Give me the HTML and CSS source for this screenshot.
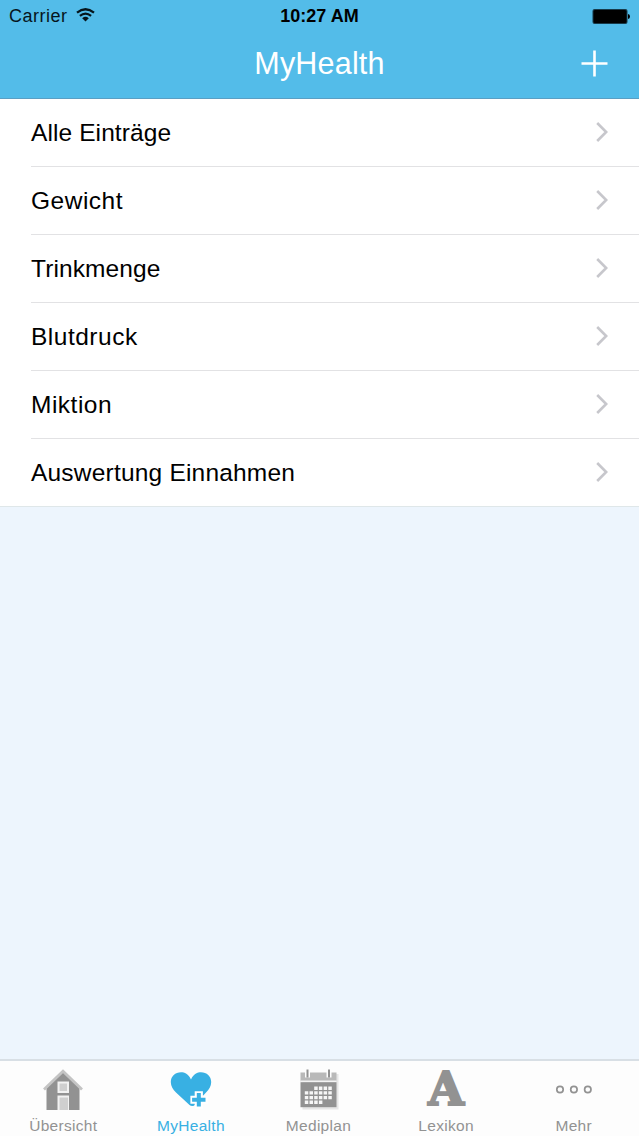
FILE: index.html
```html
<!DOCTYPE html>
<html lang="de">
  <head>
    <meta charset="UTF-8" />
    <title>MyHealth</title>
    <link rel="stylesheet" href="styles.css">
  </head>
  <body>
    <!-- Kopfbereich -->
    <header>
      <div class="statusbar">
        <div class="carrier">
          <span>Carrier</span>
          <svg width="19" height="14" viewBox="0 0 19 14">
            <path d="M1 4.6 Q9.5 -2.2 18 4.6" fill="none" stroke="#06151c" stroke-width="2.3" />
            <path d="M3.9 7.8 Q9.5 3.3 15.1 7.8" fill="none" stroke="#06151c" stroke-width="2.2" />
            <path d="M6.2 10.2 Q9.5 7.4 12.8 10.2 L9.5 13.4 Z" fill="#06151c" />
          </svg>
        </div>
        <div class="time">10:27 AM</div>
        <div class="battery">
          <svg width="38" height="15" viewBox="0 0 38 15">
            <rect x="0.5" y="0" width="35" height="15" rx="2" fill="#173a4a" />
            <rect x="1.5" y="1" width="33" height="13" rx="1.5" fill="#000" />
            <path d="M36 5 Q38 5.3 38 7.5 Q38 9.7 36 10 Z" fill="#000" />
          </svg>
        </div>
      </div>
      <div class="navbar">
        <h1>MyHealth</h1>
        <button class="add" aria-label="Hinzufügen">
          <svg width="27" height="27" viewBox="0 0 27 27">
            <path d="M13.5 0.5 V26.5 M0.5 13.5 H26.5" stroke="#fff" stroke-width="2.6" />
          </svg>
        </button>
      </div>
    </header>

    <!-- Liste -->
    <main>
      <ul class="liste">
        <li><span>Alle Einträge</span><svg class="pfeil" viewBox="0 0 12 20"><path d="M1.2 1 L10.2 10 L1.2 19" /></svg></li>
        <li><span class="weit">Gewicht</span><svg class="pfeil" viewBox="0 0 12 20"><path d="M1.2 1 L10.2 10 L1.2 19" /></svg></li>
        <li><span>Trinkmenge</span><svg class="pfeil" viewBox="0 0 12 20"><path d="M1.2 1 L10.2 10 L1.2 19" /></svg></li>
        <li><span class="weit">Blutdruck</span><svg class="pfeil" viewBox="0 0 12 20"><path d="M1.2 1 L10.2 10 L1.2 19" /></svg></li>
        <li><span class="weit">Miktion</span><svg class="pfeil" viewBox="0 0 12 20"><path d="M1.2 1 L10.2 10 L1.2 19" /></svg></li>
        <li><span class="lang">Auswertung Einnahmen</span><svg class="pfeil" viewBox="0 0 12 20"><path d="M1.2 1 L10.2 10 L1.2 19" /></svg></li>
      </ul>
    </main>

    <!-- Tableiste -->
    <nav class="tabbar">
      <a class="tab">
        <svg width="42" height="44" viewBox="0 0 42 44">
          <path d="M4.5 42 V20 L21 3 L37.5 20 V42 Z" fill="#929292" />
          <path d="M2 21.5 L21 3.2 L40 21.5" fill="none" stroke="#c4c4c4" stroke-width="2.8" />
          <rect x="15.5" y="13.5" width="11.5" height="11.5" fill="#f2f2f2" />
          <rect x="17.5" y="15.5" width="7.5" height="7.5" fill="#cfcfcf" />
          <rect x="15.5" y="27.5" width="11.5" height="14.5" fill="#f2f2f2" />
          <rect x="17.5" y="29.5" width="8.5" height="12.5" fill="#cfcfcf" />
        </svg>
        <span>Übersicht</span>
      </a>
      <a class="tab aktiv">
        <svg width="42" height="44" viewBox="0 0 42 44">
          <path d="M21 11.5 C18.5 6 14.5 4.3 11 4.3 C5.3 4.3 0.8 8.5 0.8 14 C0.8 18.5 3 21.5 6 24.5 L19.5 37 Q21 38.3 24 37.8 L36 24.5 C39 21.5 41.2 18.5 41.2 14 C41.2 8.5 36.7 4.3 31 4.3 C27.5 4.3 23.5 6 21 11.5 Z" fill="#38b0e3" />
          <path d="M24.7 23.3 H32.9 V27.7 H38 V36 H33 V41 H24.7 V35.7 H20.4 V27.7 H24.7 Z" fill="#fff" />
          <path d="M28.8 25 V38.4 M22.1 31.7 H35.5" stroke="#38b0e3" stroke-width="4" />
        </svg>
        <span>MyHealth</span>
      </a>
      <a class="tab">
        <svg width="42" height="44" viewBox="0 0 42 44">
          <path d="M5.5 6 H41.5 V41.5 H5.5 Z" fill="#e6e6e6" />
          <rect x="3.5" y="4.5" width="36" height="9" fill="#b9b9b9" />
          <path d="M3.5 13.4 H39.5" stroke="#f4f4f4" stroke-width="1.6" />
          <rect x="3.5" y="14.2" width="36" height="25" fill="#929292" />
          <path d="M10.5 0 V9.5 M32 0 V9.5" stroke="#fdfdfd" stroke-width="5" />
          <path d="M10.5 1.5 V9.5 M32 1.5 V9.5" stroke="#929292" stroke-width="2" />
          <g stroke="#f6f6f6" stroke-width="3.4" stroke-dasharray="3.5 1.2">
            <path d="M17.2 20.2 H34.9" />
            <path d="M7.8 24.9 H34.9" />
            <path d="M7.8 29.6 H34.9" />
            <path d="M7.8 34.3 H25.5" />
          </g>
        </svg>
        <span>Mediplan</span>
      </a>
      <a class="tab">
        <div class="buchstabe">A</div>
        <span>Lexikon</span>
      </a>
      <a class="tab">
        <svg width="42" height="44" viewBox="0 0 42 44">
          <g fill="none" stroke="#929292" stroke-width="1.7">
            <circle cx="7" cy="21.5" r="3.2" />
            <circle cx="20.9" cy="21.5" r="3.2" />
            <circle cx="34.8" cy="21.5" r="3.2" />
          </g>
        </svg>
        <span>Mehr</span>
      </a>
    </nav>
  </body>
</html>
```
FILE: styles.css
```css
* {
  box-sizing: border-box;
}
body {
  margin: 0;
  height: 1136px;
  display: flex;
  flex-direction: column;
  background-color: #edf5fd;
  font-family: "Liberation Sans", Arial, sans-serif;
  overflow: hidden;
}

/* Kopfbereich */
header {
  height: 99px;
  background-color: #53bce9;
  border-bottom: 1px solid #5a9fc4;
}
.statusbar {
  height: 32px;
  padding: 0 9px;
  display: grid;
  grid-template-columns: 1fr auto 1fr;
  align-items: center;
  font-size: 18px;
  color: #06151c;
}
.carrier {
  display: flex;
  align-items: center;
  gap: 8px;
  letter-spacing: 0.5px;
}
.carrier svg {
  margin-top: -3px;
}
.time {
  font-weight: bold;
  font-size: 18px;
  color: #000;
}
.battery {
  display: flex;
  justify-content: flex-end;
}
.navbar {
  height: 66px;
  padding: 0 31px;
  display: grid;
  grid-template-columns: 1fr auto 1fr;
  align-items: center;
}
.navbar h1 {
  grid-column: 2;
  margin: -4px 0 0;
  font-size: 30.5px;
  font-weight: normal;
  line-height: 60px;
  letter-spacing: 0.2px;
  color: #fff;
}
.add {
  justify-self: end;
  display: flex;
  padding: 0;
  margin-top: -3px;
  border: 0;
  background: none;
}

/* Liste */
main {
  flex: 1;
}
.liste {
  list-style: none;
  margin: 0;
  padding: 0 0 0 31px;
  background-color: #fff;
  border-bottom: 1px solid #dfe7e9;
}
.liste li {
  height: 68px;
  padding-right: 31px;
  display: flex;
  align-items: center;
  justify-content: space-between;
  border-bottom: 1px solid #e2e2e4;
  font-size: 24.5px;
  letter-spacing: 0.1px;
  color: #000;
}
.liste li span {
  padding-top: 1px;
}
.liste .weit {
  letter-spacing: 0.5px;
}
.liste .lang {
  letter-spacing: 0.2px;
}
.liste li:last-child {
  height: 67px;
  border-bottom: 0;
}
.pfeil {
  width: 12px;
  height: 20px;
  margin-top: -1px;
  fill: none;
  stroke: #c7c7cc;
  stroke-width: 2.6;
}

/* Tableiste */
.tabbar {
  height: 77px;
  padding-right: 1px;
  display: grid;
  grid-template-columns: repeat(5, 1fr);
  background-color: #fdfdfd;
  border-top: 2px solid #d8dfe5;
}
.tab {
  display: flex;
  flex-direction: column;
  align-items: center;
  padding: 7px 1px 0 0;
  font-size: 15.5px;
  color: #929292;
}
.tab span {
  margin-top: 4px;
  line-height: 20px;
  letter-spacing: 0.3px;
}
.tab.aktiv {
  color: #38b0e3;
}
.buchstabe {
  height: 44px;
  line-height: 42px;
  font-family: "DejaVu Serif", serif;
  font-weight: bold;
  font-size: 46px;
  -webkit-text-stroke: 2.2px #929292;
}
```
